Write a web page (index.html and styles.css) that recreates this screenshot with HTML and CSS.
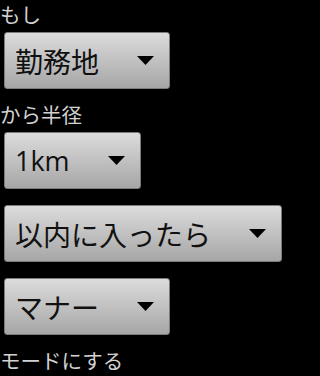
FILE: index.html
```html
<!DOCTYPE html>
<html lang="ja">
<head>
<meta charset="utf-8">
<link rel="stylesheet" href="styles.css">
</head>
<body>
<div class="form">
  <div class="label">もし</div>
  <div class="spinner first">
    <span class="value">勤務地</span>
    <svg class="arrow" width="17" height="9" viewBox="0 0 17 9"><polygon points="0,0 17,0 8.5,9" fill="#000"/></svg>
  </div>
  <div class="label gap-label">から半径</div>
  <div class="spinner first">
    <span class="value latin">1km</span>
    <svg class="arrow" width="17" height="9" viewBox="0 0 17 9"><polygon points="0,0 17,0 8.5,9" fill="#000"/></svg>
  </div>
  <div class="spinner next">
    <span class="value">以内に入ったら</span>
    <svg class="arrow" width="17" height="9" viewBox="0 0 17 9"><polygon points="0,0 17,0 8.5,9" fill="#000"/></svg>
  </div>
  <div class="spinner next">
    <span class="value">マナー</span>
    <svg class="arrow" width="17" height="9" viewBox="0 0 17 9"><polygon points="0,0 17,0 8.5,9" fill="#000"/></svg>
  </div>
  <div class="label gap-label">モードにする</div>
</div>
</body>
</html>
```
FILE: styles.css
```css
html, body {
  margin: 0;
  padding: 0;
  background: #000;
}
body {
  width: 283px;
  height: 376px;
  overflow: hidden;
  font-family: "Noto Sans CJK JP", "Noto Sans", sans-serif;
}
.form {
  display: flex;
  flex-direction: column;
  align-items: flex-start;
}
.label {
  color: #d2d2d2;
  font-size: 20.5px;
  line-height: 28px;
  height: 28px;
}
.gap-label {
  margin-top: 11px;
}
.spinner {
  display: flex;
  align-items: center;
  box-sizing: border-box;
  height: 57px;
  margin-left: 4px;
  padding: 0 15px 0 10px;
  gap: 38px;
  border: 1px solid #7c7c7c;
  border-radius: 3px;
  background: linear-gradient(#dcdcdc, #a6a6a6);
}
.spinner.first {
  margin-top: 4px;
}
.spinner.next {
  margin-top: 16px;
}
.value {
  color: #111;
  font-size: 28px;
  line-height: 34px;
  white-space: nowrap;
}
.value.latin {
  font-family: "Open Sans", "Noto Sans CJK JP", sans-serif;
  font-size: 27px;
}
.arrow {
  flex: none;
  display: block;
}
```
